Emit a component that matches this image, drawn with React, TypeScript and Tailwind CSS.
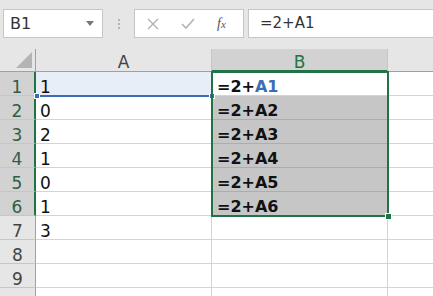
import React from "react"

const colA = ["1", "0", "2", "1", "0", "1", "3", "", "", ""]
const font = { fontFamily: '"DejaVu Sans", "Liberation Sans", sans-serif' }

export default function App() {
  const rows = Array.from({ length: 10 }, (_, i) => i + 1)

  return (
    <div className="w-[433px] h-[296px] overflow-hidden bg-white" style={font}>
      {/* formula bar */}
      <div className="h-[49px] bg-[#e6e6e6] flex items-start pt-[9px] pl-[3px]">
        <div className="w-[100px] h-[29px] bg-white border border-[#c6c6c6] flex items-center justify-between pl-[6px] pr-[8px]">
          <span className="text-[16px] text-[#333]">B1</span>
          <svg width="8" height="5" viewBox="0 0 8 5">
            <path d="M0 0 L8 0 L4 5 Z" fill="#777" />
          </svg>
        </div>
        <div className="w-[31px] h-[29px] flex flex-col items-center justify-center gap-[2px]">
          <span className="w-[2px] h-[2px] bg-[#b5b5b5]" />
          <span className="w-[2px] h-[2px] bg-[#b5b5b5]" />
          <span className="w-[2px] h-[2px] bg-[#b5b5b5]" />
        </div>
        <div className="w-[110px] h-[29px] bg-white border border-[#c6c6c6] flex items-center">
          <svg width="12" height="12" viewBox="0 0 12 12" className="ml-[12px]">
            <path d="M1 1 L11 11 M11 1 L1 11" stroke="#b3b3b3" strokeWidth="1.4" />
          </svg>
          <svg width="14" height="12" viewBox="0 0 14 12" className="ml-[22px]">
            <path d="M1 6 L5 10 L13 1" stroke="#b3b3b3" strokeWidth="1.6" fill="none" />
          </svg>
          <span className="ml-[22px] text-[14px] italic text-[#555]" style={{ fontFamily: '"Liberation Serif", serif' }}>
            f<span className="text-[11px]">x</span>
          </span>
        </div>
        <div className="ml-[4px] flex-1 h-[29px] bg-white border border-[#c6c6c6] border-r-0 flex items-center pl-[11px]">
          <span className="text-[15px] text-[#333]">=2+A1</span>
        </div>
      </div>

      {/* grid */}
      <div className="relative grid grid-cols-[36px_176px_176px_1fr] grid-rows-[23px_repeat(10,24px)]">
        {/* header row */}
        <div className="relative bg-[#e6e6e6] border-r border-b border-[#a0a0a0]">
          <svg width="16" height="16" viewBox="0 0 16 16" className="absolute right-[3px] bottom-[3px]">
            <path d="M16 0 L16 16 L0 16 Z" fill="#b4b4b4" />
          </svg>
        </div>
        <div className="bg-[#e6e6e6] border-r border-[#c6c6c6] border-b border-b-[#a0a0a0] flex items-end justify-center text-[17px] leading-[17px] text-[#444]">
          A
        </div>
        <div className="bg-[#d2d2d2] border-r border-[#c6c6c6] border-b-2 border-b-[#217346] flex items-end justify-center text-[17px] leading-[16px] text-[#217346]">
          B
        </div>
        <div className="bg-[#e6e6e6] border-b border-[#a0a0a0]" />

        {rows.map((r) => {
          const sel = r <= 6
          return (
            <React.Fragment key={r}>
              <div
                className={`flex items-end justify-center text-[17px] leading-[16px] border-b border-[#c6c6c6] ${
                  sel
                    ? "bg-[#d2d2d2] text-[#2f5e44] border-r-2 border-r-[#217346]"
                    : "bg-[#e6e6e6] text-[#444] border-r border-r-[#a0a0a0]"
                }`}
              >
                {r < 10 ? r : ""}
              </div>
              <div
                className={`flex items-end pl-[4px] text-[17px] leading-[16px] text-[#111] border-r border-b border-[#d4d4d4] ${
                  r === 1 ? "bg-[#e8eef7]" : "bg-white"
                }`}
              >
                {colA[r - 1]}
              </div>
              <div
                className={`flex items-end pl-[5px] text-[16px] font-bold leading-[16px] text-[#111] border-r border-b ${
                  sel ? (r === 1 ? "bg-white border-[#d4d4d4]" : "bg-[#c6c6c6] border-[#adadad]") : "bg-white border-[#d4d4d4]"
                }`}
              >
                {sel && (
                  <span>
                    =2+<span className={r === 1 ? "text-[#3c6db4]" : ""}>A{r}</span>
                  </span>
                )}
              </div>
              <div className="border-b border-[#d4d4d4] bg-white" />
            </React.Fragment>
          )
        })}

        {/* A1 reference underline */}
        <div className="absolute left-[36px] top-[46px] w-[176px] h-[2px] bg-[#3c6db4]" />
        <div className="absolute left-[34px] top-[44px] w-[6px] h-[6px] bg-[#3c6db4] border border-white" />
        <div className="absolute left-[209px] top-[44px] w-[6px] h-[6px] bg-[#3c6db4] border border-white" />

        {/* selection B1:B6 */}
        <div className="absolute left-[211px] top-[22px] w-[178px] h-[146px] border-2 border-[#217346] pointer-events-none" />
        <div className="absolute left-[385px] top-[164px] w-[7px] h-[7px] bg-[#217346] border border-white" />
      </div>
    </div>
  )
}
